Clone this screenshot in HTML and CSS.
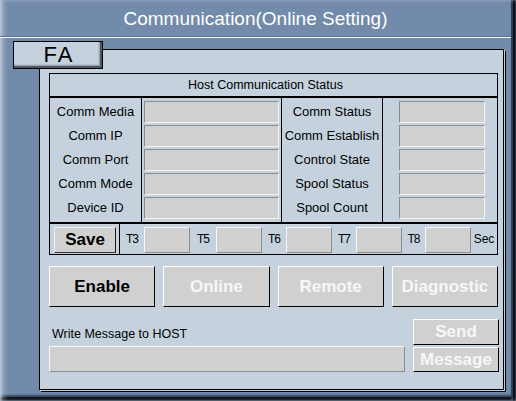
FILE: index.html
```html
<!DOCTYPE html>
<html lang="en">
<head>
<meta charset="utf-8">
<title>Communication(Online Setting)</title>
<link rel="stylesheet" href="styles.css">
</head>
<body>
<div class="window">
  <div class="titlebar">Communication(Online Setting)</div>
  <div class="main">
    <div class="tab">FA</div>
    <div class="panel">
      <div class="status">
        <div class="status-head">Host Communication Status</div>
        <div class="status-grid">
          <div class="col col-l1">
            <div class="row label">Comm Media</div>
            <div class="row label">Comm IP</div>
            <div class="row label">Comm Port</div>
            <div class="row label">Comm Mode</div>
            <div class="row label">Device ID</div>
          </div>
          <div class="col col-i1">
            <div class="row"><input class="field sunken wide" type="text" readonly></div>
            <div class="row"><input class="field sunken wide" type="text" readonly></div>
            <div class="row"><input class="field sunken wide" type="text" readonly></div>
            <div class="row"><input class="field sunken wide" type="text" readonly></div>
            <div class="row"><input class="field sunken wide" type="text" readonly></div>
          </div>
          <div class="col col-l2">
            <div class="row label">Comm Status</div>
            <div class="row label">Comm Establish</div>
            <div class="row label">Control State</div>
            <div class="row label">Spool Status</div>
            <div class="row label">Spool Count</div>
          </div>
          <div class="col col-i2">
            <div class="row"><input class="field sunken narrow" type="text" readonly></div>
            <div class="row"><input class="field sunken narrow" type="text" readonly></div>
            <div class="row"><input class="field sunken narrow" type="text" readonly></div>
            <div class="row"><input class="field sunken narrow" type="text" readonly></div>
            <div class="row"><input class="field sunken narrow" type="text" readonly></div>
          </div>
        </div>
        <div class="timers">
          <div class="save-cell"><button class="btn btn-save" type="button">Save</button></div>
          <span class="t-label w24">T3</span><input class="field raised t-field" type="text" readonly>
          <span class="t-label w26">T5</span><input class="field raised t-field" type="text" readonly>
          <span class="t-label w24">T6</span><input class="field raised t-field" type="text" readonly>
          <span class="t-label w24">T7</span><input class="field raised t-field" type="text" readonly>
          <span class="t-label w23">T8</span><input class="field raised t-field" type="text" readonly>
          <span class="t-label sec">Sec</span>
        </div>
      </div>
      <div class="actions">
        <button class="btn btn-big" type="button">Enable</button>
        <button class="btn btn-big disabled" type="button">Online</button>
        <button class="btn btn-big disabled" type="button">Remote</button>
        <button class="btn btn-big disabled" type="button">Diagnostic</button>
      </div>
      <div class="message-row">
        <div class="message-left">
          <div class="msg-label">Write Message to HOST</div>
          <input class="field raised msg-field" type="text" readonly>
        </div>
        <div class="message-right">
          <button class="btn disabled btn-send" type="button">Send</button>
          <button class="btn disabled btn-msg" type="button">Message</button>
        </div>
      </div>
    </div>
  </div>
</div>
</body>
</html>
```
FILE: styles.css
```css
* { box-sizing: border-box; }
html, body { margin: 0; padding: 0; }
body {
  width: 516px;
  height: 401px;
  overflow: hidden;
  font-family: "Liberation Sans", Arial, sans-serif;
  background: #728baa;
}
.window {
  width: 516px;
  height: 401px;
  background: #728baa;
  display: flex;
  flex-direction: column;
  box-shadow:
    inset 2px 0 2px rgba(220, 228, 238, 0.55),
    inset 5px 0 4px rgba(200, 212, 226, 0.35),
    inset -1px 0 0 #2a3544,
    inset -3px 0 0 #0c1016,
    inset -5px 0 1px #2c3a4c,
    inset 0 -1px 0 #26303d,
    inset 0 -4px 0 #0e131a,
    inset 0 -6px 2px #35475c;
}
.titlebar {
  height: 38px;
  padding-top: 2px;
  line-height: 34px;
  text-align: center;
  color: #ffffff;
  font-size: 19px;
  border-bottom: 1px solid #f4f6f9;
  margin-right: 5px;
  box-shadow: inset 0 -1px 0 #5f7590;
}
.main {
  position: relative;
  flex: 1;
  padding: 11px 0 0 39px;
}
.tab {
  position: absolute;
  left: 13px;
  top: 3px;
  width: 90px;
  height: 28px;
  z-index: 2;
  background: #c5d2de;
  border: 1px solid #000;
  box-shadow: inset -2px -2px 0 #4f565e, inset -3px -3px 2px #8d98a4;
  font-size: 22px;
  letter-spacing: 2px;
  padding-left: 2px;
  line-height: 26px;
  text-align: center;
  color: #000;
}
.panel {
  width: 465px;
  height: 341px;
  background: #c5d2de;
  border: 1px solid #000;
  box-shadow: 1px 1px 0 #c5d2de, 2px 2px 0 #000;
  padding: 23px 5px 0 9px;
}
.status {
  width: 449px;
  border: 1px solid #000;
}
.status-head {
  height: 24px;
  line-height: 22px;
  border-bottom: 2px solid #000;
  text-align: center;
  font-size: 12.5px;
  padding-right: 16px;
  color: #000;
}
.status-grid {
  display: grid;
  grid-template-columns: 92px 140px 101px 114px;
  height: 126px;
  border-bottom: 2px solid #000;
}
.col {
  display: flex;
  flex-direction: column;
  padding-top: 2px;
}
.col-l1, .col-i1, .col-l2 { border-right: 1px solid #000; }
.row {
  height: 24px;
  display: flex;
}
.label {
  line-height: 24px;
  font-size: 13px;
  justify-content: center;
  color: #000;
  white-space: nowrap;
}
.field {
  display: block;
  margin: 0;
  padding: 0;
  background: #d0d0d0;
  font: inherit;
  outline: none;
}
.sunken {
  border: 1px solid;
  border-color: #8e8e8e #f4f4f4 #f4f4f4 #8e8e8e;
  height: 22px;
  margin-top: 1px;
}
.raised {
  border: 1px solid;
  border-color: #f6f6f6 #8e8e8e #8e8e8e #f6f6f6;
}
.wide { width: 135px; margin-left: 2px; }
.narrow { width: 86px; margin-left: 16px; }
.timers {
  display: flex;
  height: 30px;
}
.save-cell {
  width: 70px;
  border-right: 1px solid #000;
  padding: 3px 0 0 4px;
}
.btn {
  margin: 0;
  padding: 0;
  font-family: "Liberation Sans", Arial, sans-serif;
  font-weight: bold;
  font-size: 17px;
  background: #d0d0d0;
  border: 1px solid;
  border-color: #ffffff #000000 #000000 #ffffff;
  color: #000;
  display: flex;
  align-items: center;
  justify-content: center;
}
.btn.disabled { color: #f7f7f7; }
.btn-save {
  width: 62px;
  height: 26px;
  border-color: #f0f0f0 #1a1a1a #3a3a3a #f0f0f0;
}
.t-label {
  font-size: 12px;
  letter-spacing: -1px;
  line-height: 30px;
  text-align: center;
  color: #000;
}
.w24 { width: 24px; }
.w26 { width: 26px; }
.w23 { width: 23px; }
.sec { width: 26px; letter-spacing: 0; }
.t-field {
  width: 46px;
  height: 26px;
  margin-top: 3px;
}
.actions {
  display: grid;
  grid-template-columns: repeat(4, 1fr);
  gap: 8px;
  width: 449px;
  margin-top: 11px;
  height: 41px;
}
.btn-big { height: 41px; }
.message-row {
  display: flex;
  gap: 8px;
  margin-top: 12px;
  width: 449px;
}
.message-left {
  width: 356px;
  display: flex;
  flex-direction: column;
}
.msg-label {
  height: 27px;
  padding: 8px 0 0 3px;
  line-height: 15px;
  font-size: 12.5px;
  color: #000;
}
.msg-field {
  width: 356px;
  height: 26px;
}
.message-right {
  width: 86px;
  display: flex;
  flex-direction: column;
  gap: 2px;
}
.btn-send { height: 26px; width: 86px; }
.btn-msg { height: 25px; width: 86px; }
```
